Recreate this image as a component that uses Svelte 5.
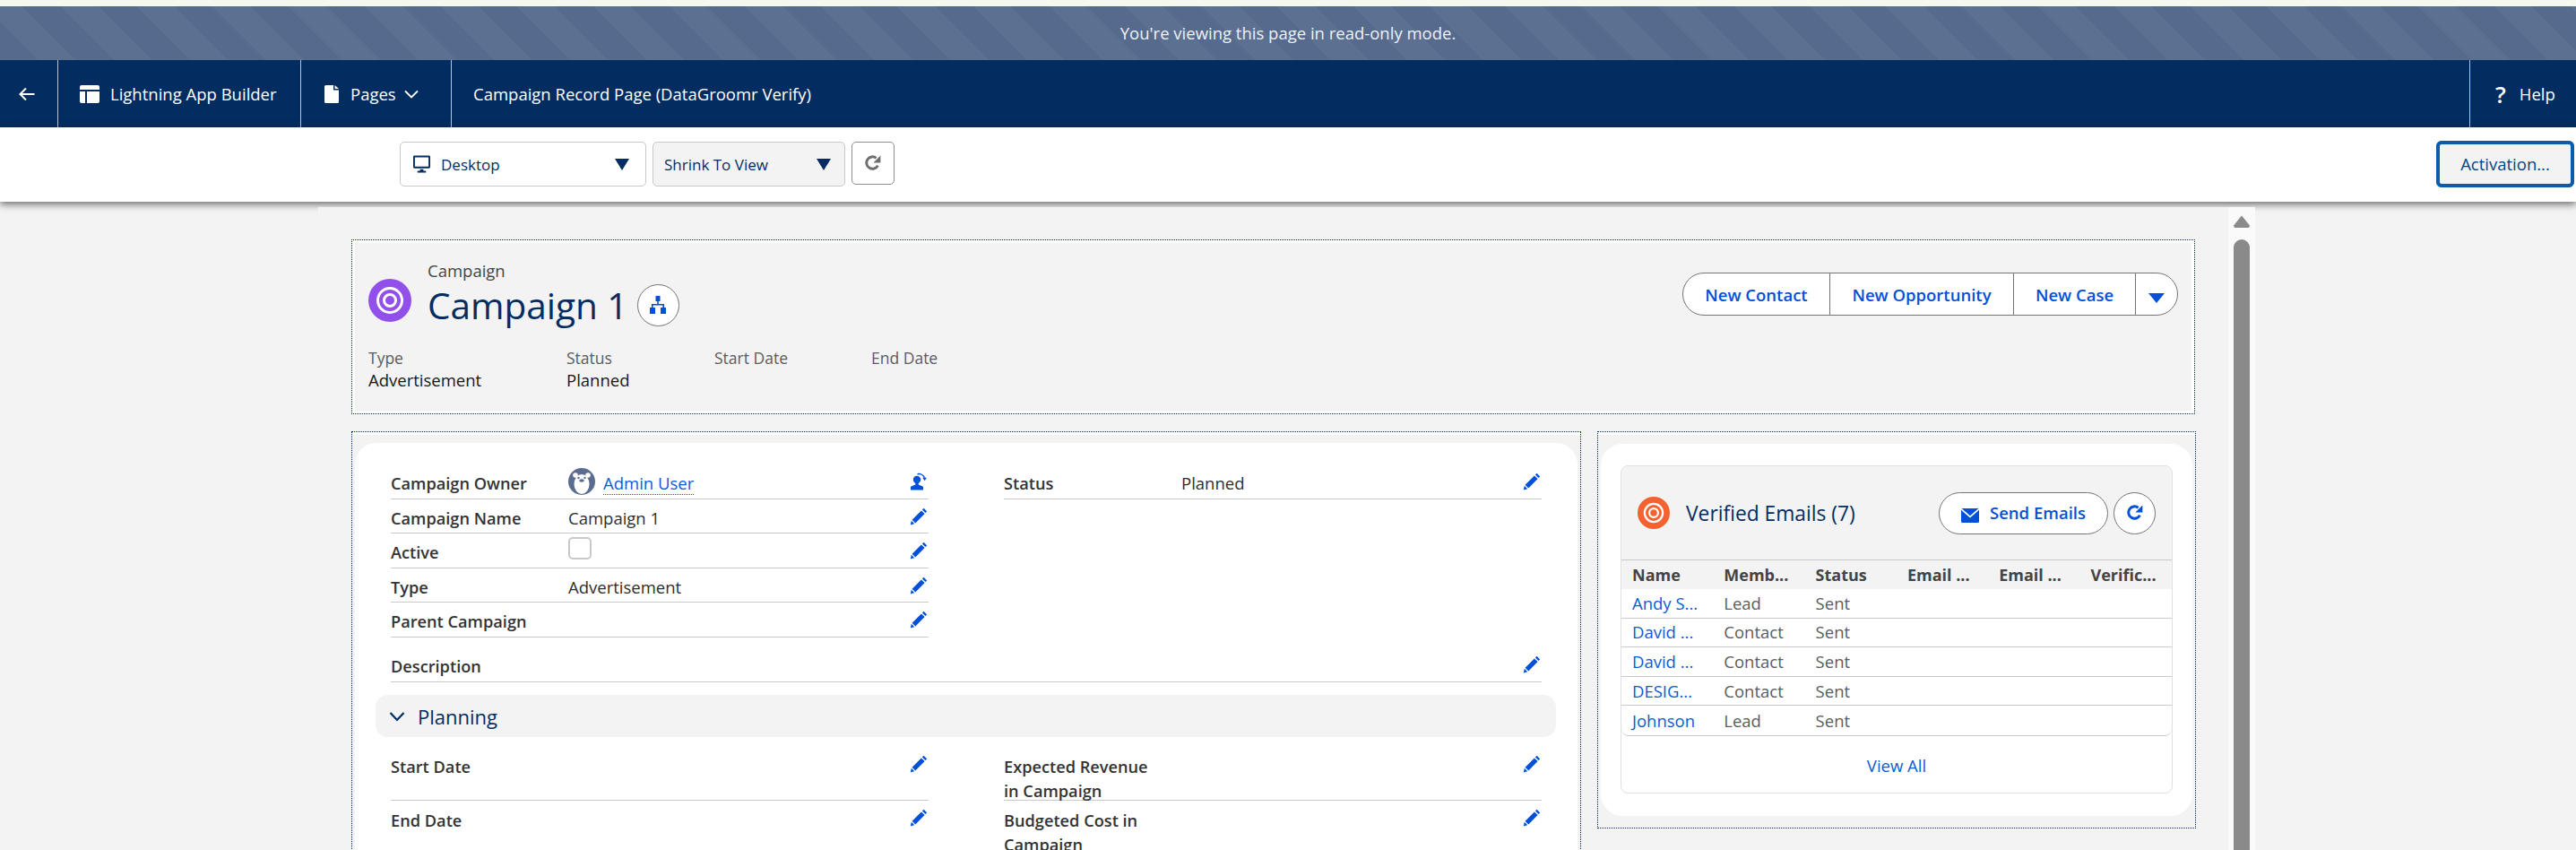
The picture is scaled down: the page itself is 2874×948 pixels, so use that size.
<script>
	const highlights = [
		{ label: 'Type', value: 'Advertisement', width: 221 },
		{ label: 'Status', value: 'Planned', width: 165 },
		{ label: 'Start Date', value: '', width: 175 },
		{ label: 'End Date', value: '', width: 120 }
	];

	const leftFields = [
		{ label: 'Campaign Name', value: 'Campaign 1' },
		{ label: 'Active', checkbox: true },
		{ label: 'Type', value: 'Advertisement' },
		{ label: 'Parent Campaign', value: '' }
	];

	const columns = ['Name', 'Memb...', 'Status', 'Email ...', 'Email ...', 'Verific...'];

	const emails = [
		{ name: 'Andy S...', type: 'Lead' },
		{ name: 'David ...', type: 'Contact' },
		{ name: 'David ...', type: 'Contact' },
		{ name: 'DESIG...', type: 'Contact' },
		{ name: 'Johnson', type: 'Lead' }
	];
</script>

{#snippet pencil()}
	<svg class="edit" viewBox="0 0 20 20" aria-hidden="true">
		<path d="M15.6 0.8l3.6 3.6-1.7 1.7-3.6-3.6z" />
		<path d="M12.9 3.4l3.7 3.7L6.3 17.4l-3.7-3.7z" />
		<path d="M1.8 14.8l3.4 3.4-4.4 1.2z" />
	</svg>
{/snippet}

{#snippet refresh()}
	<svg viewBox="0 0 20 20" aria-hidden="true">
		<path d="M15.4 12.6A6.700 6.700 0 1 1 13.600 4.300" fill="none" stroke="currentColor" stroke-width="3" />
		<path d="M18.400 1.600v8h-8z" fill="currentColor" />
	</svg>
{/snippet}

{#snippet target(color)}
	<svg class="target" viewBox="0 0 48 48" aria-hidden="true">
		<circle cx="24" cy="24" r="24" fill={color} />
		<circle cx="24" cy="24" r="13.500" fill="none" stroke="#fff" stroke-width="3" />
		<circle cx="24" cy="24" r="6.500" fill="none" stroke="#fff" stroke-width="3" />
	</svg>
{/snippet}

<div class="page">
	<div class="topline"></div>
	<div class="banner">You're viewing this page in read-only mode.</div>

	<nav class="nav">
		<div class="nav-item back">
			<svg class="back-arrow" viewBox="0 0 20 20" aria-hidden="true">
				<path d="M18.500 10H2.500M9 3.500L2.500 10 9 16.500" fill="none" stroke="#fff" stroke-width="2" />
			</svg>
		</div>
		<div class="nav-item builder">
			<svg class="nav-icon" viewBox="0 0 22 20" aria-hidden="true">
				<path d="M2 0h18a2 2 0 0 1 2 2v3H0V2a2 2 0 0 1 2-2zM0 7h6v13H2a2 2 0 0 1-2-2zM8 7h14v11a2 2 0 0 1-2 2H8z" fill="#fff" />
			</svg>
			<span>Lightning App Builder</span>
		</div>
		<div class="nav-item pages">
			<svg class="page-icon" viewBox="0 0 16 20" aria-hidden="true">
				<path d="M1.500 0H10v5.500h6v13a1.500 1.500 0 0 1-1.500 1.500h-13A1.500 1.500 0 0 1 0 18.500v-17A1.500 1.500 0 0 1 1.500 0zM11.500 0L16 4h-4.500z" fill="#fff" />
			</svg>
			<span>Pages</span>
			<svg class="nav-chevron" viewBox="0 0 16 10" aria-hidden="true">
				<path d="M1 1.500l7 7 7-7" fill="none" stroke="#fff" stroke-width="1.800" />
			</svg>
		</div>
		<div class="nav-item page-title">Campaign Record Page (DataGroomr Verify)</div>
		<div class="nav-item help">
			<span class="help-mark">?</span>
			<span>Help</span>
		</div>
	</nav>

	<div class="toolbar">
		<div class="select desktop">
			<svg class="monitor" viewBox="0 0 20 20" aria-hidden="true">
				<path d="M1.500 0h17A1.500 1.500 0 0 1 20 1.500v12a1.500 1.500 0 0 1-1.500 1.500h-17A1.500 1.500 0 0 1 0 13.500v-12A1.500 1.500 0 0 1 1.500 0zM2 2v11h16V2zM8 16h4v2h3v2H5v-2h3z" fill="#032d60" fill-rule="evenodd" />
			</svg>
			<span>Desktop</span>
			<i class="caret"></i>
		</div>
		<div class="select shrink">
			<span>Shrink To View</span>
			<i class="caret"></i>
		</div>
		<div class="tool-refresh">{@render refresh()}</div>
		<button class="activation">Activation...</button>
	</div>

	<div class="canvas">
		<div class="stage">
			<section class="frame header-frame">
				<div class="record-head">
					<div class="record-top">
						<div class="record-id">
							{@render target('#9050e9')}
							<div class="record-names">
								<div class="object-name">Campaign</div>
								<div class="record-title">
									<h1>Campaign 1</h1>
									<span class="round-btn hierarchy">
										<svg viewBox="0 0 18 20" aria-hidden="true">
											<path d="M6.500 0h5v6h-1.700v3H16v4h2v7h-6v-7h2.400v-2.400H3.600V13H6v7H0v-7h2V9h6.200V6H6.500z" fill="#0250d9" />
										</svg>
									</span>
								</div>
							</div>
						</div>
						<div class="action-group">
							<button class="new-contact">New Contact</button>
							<button class="new-opp">New Opportunity</button>
							<button class="new-case">New Case</button>
							<button class="more"><i></i></button>
						</div>
					</div>
					<div class="highlights">
						{#each highlights as item}
							<div class="highlight" style="width: {item.width}px">
								<div class="hl-label">{item.label}</div>
								<div class="hl-value">{item.value}</div>
							</div>
						{/each}
					</div>
				</div>
			</section>

			<div class="columns">
				<section class="frame main-frame">
					<div class="card detail-card">
						<div class="detail-grid">
							<div class="field-list">
								<div class="field">
									<span class="label">Campaign Owner</span>
									<svg class="avatar" viewBox="0 0 30 30" aria-hidden="true">
										<circle cx="15" cy="15" r="15" fill="#5a6c8f" />
										<ellipse cx="15" cy="18" rx="8.500" ry="11" fill="#fff" />
										<circle cx="8" cy="8" r="2.800" fill="#fff" />
										<circle cx="22" cy="8" r="2.800" fill="#fff" />
										<circle cx="11.500" cy="11" r="1.200" fill="#5a6c8f" />
										<circle cx="18.500" cy="11" r="1.200" fill="#5a6c8f" />
										<ellipse cx="15" cy="14" rx="2.800" ry="1.800" fill="#5a6c8f" />
									</svg>
									<a class="owner-link" href="#owner">Admin User</a>
									<svg class="edit" viewBox="0 0 20 20" aria-hidden="true">
										<circle cx="8" cy="8" r="4.200" />
										<path d="M6.300 12h3.400v1.600l5.300 2.200V19.500H1v-3.700l5.300-2.200z" />
										<path d="M8.500 1.800a6.800 6.800 0 0 1 8 4" fill="none" stroke="#0250d9" stroke-width="1.500" />
										<path d="M14.200 5.800h4.800l-2.400 3.400z" />
									</svg>
								</div>
								{#each leftFields as field}
									<div class="field">
										<span class="label">{field.label}</span>
										{#if field.checkbox}
											<span class="checkbox"></span>
										{:else}
											<span class="value">{field.value}</span>
										{/if}
										{@render pencil()}
									</div>
								{/each}
							</div>
							<div class="field-list">
								<div class="field">
									<span class="label">Status</span>
									<span class="value">Planned</span>
									{@render pencil()}
								</div>
							</div>
						</div>

						<div class="field description">
							<span class="label">Description</span>
							{@render pencil()}
						</div>

						<div class="section-head">
							<svg viewBox="0 0 18 12" aria-hidden="true">
								<path d="M1.500 2l7.500 8 7.500-8" fill="none" stroke="#032d60" stroke-width="2.200" />
							</svg>
							<span>Planning</span>
						</div>

						<div class="detail-grid planning">
							<div class="field-list">
								<div class="field tall">
									<span class="label">Start Date</span>
									{@render pencil()}
								</div>
								<div class="field tall">
									<span class="label">End Date</span>
									{@render pencil()}
								</div>
							</div>
							<div class="field-list">
								<div class="field tall">
									<span class="label">Expected Revenue<br />in Campaign</span>
									{@render pencil()}
								</div>
								<div class="field tall">
									<span class="label">Budgeted Cost in<br />Campaign</span>
									{@render pencil()}
								</div>
							</div>
						</div>
					</div>
				</section>

				<section class="frame side-frame">
					<div class="card side-card">
						<div class="related">
							<div class="related-head">
								<div class="related-title">
									{@render target('#f4622f')}
									<h2>Verified Emails (7)</h2>
								</div>
								<div class="related-actions">
									<button class="send">
										<svg viewBox="0 0 20 16" aria-hidden="true">
											<path d="M0.500 0h19L10 8.200z" fill="#0250d9" />
											<path d="M0 1.800l10 8.800 10-8.800V14.500A1.500 1.500 0 0 1 18.500 16h-17A1.500 1.500 0 0 1 0 14.500z" fill="#0250d9" />
										</svg>
										Send Emails
									</button>
									<span class="round-btn">{@render refresh()}</span>
								</div>
							</div>
							<div class="table">
								<div class="row table-head">
									{#each columns as col}
										<span>{col}</span>
									{/each}
								</div>
								{#each emails as email}
									<div class="row">
										<a href="#record">{email.name}</a>
										<span>{email.type}</span>
										<span>Sent</span>
									</div>
								{/each}
							</div>
							<div class="view-all"><a href="#all">View All</a></div>
						</div>
					</div>
				</section>
			</div>
		</div>

		<div class="scrollbar">
			<svg class="scroll-up" viewBox="0 0 18 14" aria-hidden="true">
				<path d="M9 0.500L18 11.500Q18 14 16 14H2Q0 14 0 11.500z" fill="#8a8a8a" />
			</svg>
			<div class="thumb"></div>
		</div>
		<div class="gutter"></div>
	</div>
</div>

<style>
	:global(body) {
		margin: 0;
		background: #f3f3f3;
	}

	.page {
		height: 948px;
		width: 2874px;
		overflow: hidden;
		display: flex;
		flex-direction: column;
		font-family: 'Open Sans', 'Noto Sans', sans-serif;
		font-size: 18.500px;
		line-height: 24px;
		color: #181818;
	}

	button {
		font: inherit;
		cursor: pointer;
	}

	a {
		color: #0b5cd5;
		text-decoration: none;
	}

	.topline {
		height: 7px;
		background: #f5f8ee;
	}

	.banner {
		height: 60px;
		display: flex;
		align-items: center;
		justify-content: center;
		color: #eef1f6;
		background: repeating-linear-gradient(45deg, #566a8e 0 30px, #5c7091 30px 60px);
	}

	.nav {
		height: 75px;
		display: flex;
		background: #032d60;
		color: #fff;
	}

	.nav-item {
		display: flex;
		align-items: center;
		border-right: 1px solid #b8c4d4;
	}

	.back {
		width: 65px;
		padding-left: 20px;
		box-sizing: border-box;
	}

	.back-arrow {
		width: 20px;
		height: 20px;
	}

	.builder {
		width: 271px;
		padding-left: 24px;
		box-sizing: border-box;
		gap: 12px;
	}

	.nav-icon {
		width: 22px;
		height: 20px;
	}

	.pages {
		width: 168px;
		padding-left: 26px;
		box-sizing: border-box;
	}

	.page-icon {
		width: 16px;
		height: 20px;
		margin-right: 13px;
	}

	.nav-chevron {
		width: 16px;
		height: 10px;
		margin-left: 9px;
	}

	.page-title {
		flex: 1;
		padding-left: 24px;
	}

	.help {
		width: 118px;
		padding-left: 28px;
		box-sizing: border-box;
		border-right: 0;
	}

	.help-mark {
		font-size: 26px;
		font-weight: 600;
		margin-right: 15px;
	}

	.toolbar {
		height: 83px;
		display: flex;
		align-items: flex-start;
		padding: 16px 2px 0 446px;
		box-sizing: border-box;
		background: #fff;
		box-shadow: 0 3px 8px rgba(0, 0, 0, 0.55);
		position: relative;
		z-index: 2;
		color: #032d60;
	}

	.select {
		height: 50px;
		display: flex;
		align-items: center;
		box-sizing: border-box;
		border: 1px solid #c9c9c9;
		border-radius: 5px;
		font-size: 17px;
	}

	.select span {
		padding-top: 2px;
	}

	.desktop {
		width: 275px;
		padding: 0 18px 0 14px;
		background: #fff;
	}

	.shrink {
		width: 215px;
		margin-left: 7px;
		padding: 0 15px 0 12px;
		background: #f3f3f3;
	}

	.monitor {
		width: 19px;
		height: 20px;
		margin-right: 12px;
	}

	.caret {
		margin-left: auto;
		width: 0;
		height: 0;
		border-left: 8px solid transparent;
		border-right: 8px solid transparent;
		border-top: 13px solid #032d60;
	}

	.tool-refresh {
		width: 48px;
		height: 48px;
		margin-left: 7px;
		box-sizing: border-box;
		display: flex;
		align-items: center;
		justify-content: center;
		border: 1px solid #8f8f8f;
		border-radius: 5px;
		color: #706e6b;
	}

	.tool-refresh svg {
		width: 20px;
		height: 20px;
	}

	.activation {
		margin-left: auto;
		width: 154px;
		height: 52px;
		margin-top: -1px;
		box-sizing: border-box;
		background: #f3f3f3;
		color: #014486;
		border: 1px solid #8f8f8f;
		border-radius: 6px;
		outline: 3px solid #0b5cab;
		outline-offset: -3px;
		box-shadow: inset 0 0 0 3px #0b5cab;
	}

	.canvas {
		flex: 1;
		display: flex;
		padding: 6px 0 0 355px;
		min-height: 0;
		position: relative;
	}

	.stage {
		width: 2131px;
		box-sizing: border-box;
		padding: 36px 37px 0;
		background: #f3f3f3;
		position: relative;
		z-index: 3;
	}

	.scrollbar {
		width: 30px;
		background: #fafafa;
		padding: 9px 6px 0;
		box-sizing: border-box;
		position: relative;
		z-index: 3;
	}

	.scroll-up {
		display: block;
		width: 18px;
		height: 14px;
	}

	.thumb {
		margin-top: 13px;
		height: 800px;
		background: #8a8a8a;
		border-radius: 9px 9px 0 0;
	}

	.gutter {
		flex: 1;
	}

	.frame {
		box-sizing: border-box;
		border: 1px dotted #032d60;
		padding: 3px;
		background: #fff;
	}

	.header-frame {
		height: 195px;
	}

	.record-head {
		height: 100%;
		box-sizing: border-box;
		background: #f3f3f3;
		padding: 33px 15px 0 15px;
	}

	.record-top {
		display: flex;
		justify-content: space-between;
		align-items: flex-start;
		height: 84px;
	}

	.record-id {
		display: flex;
		gap: 18px;
		align-items: center;
	}

	.target {
		display: block;
		width: 48px;
		height: 48px;
		flex: none;
	}

	.record-names {
		margin-top: -14px;
	}

	.object-name {
		color: #444;
		line-height: 24px;
	}

	.record-title {
		display: flex;
		align-items: center;
		gap: 10px;
		margin-top: 1px;
	}

	h1 {
		margin: 0;
		font-size: 40.500px;
		font-weight: 400;
		line-height: 48px;
		color: #032d60;
		padding-top: 2px;
	}

	.round-btn {
		width: 47px;
		height: 47px;
		box-sizing: border-box;
		display: flex;
		align-items: center;
		justify-content: center;
		background: #fff;
		border: 1px solid #747474;
		border-radius: 50%;
		color: #0250d9;
		flex: none;
	}

	.round-btn svg {
		width: 20px;
		height: 20px;
	}

	.action-group {
		display: flex;
		height: 48px;
		box-sizing: border-box;
		border: 1px solid #747474;
		border-radius: 24px;
		background: #fff;
		overflow: hidden;
	}

	.action-group button {
		border: 0;
		border-right: 1px solid #747474;
		background: none;
		color: #0250d9;
		font-weight: 600;
		padding: 1px 0 0;
	}

	.new-contact {
		width: 164px;
	}

	.new-opp {
		width: 205px;
	}

	.new-case {
		width: 136px;
	}

	.action-group .more {
		width: 46px;
		border-right: 0;
	}

	.more i {
		display: block;
		margin: 8px auto 0;
		width: 0;
		height: 0;
		border-left: 9px solid transparent;
		border-right: 9px solid transparent;
		border-top: 11px solid #0250d9;
	}

	.highlights {
		display: flex;
		margin-top: -1px;
	}

	.hl-label {
		color: #5c5c5c;
		line-height: 24px;
		font-size: 17.500px;
	}

	.hl-value {
		line-height: 26px;
		min-height: 26px;
	}

	.columns {
		display: grid;
		grid-template-columns: 1372px 668px;
		gap: 18px;
		margin-top: 19px;
		align-items: start;
	}

	.main-frame {
		height: 520px;
	}

	.card {
		background: #fff;
		border-radius: 24px;
	}

	.detail-card,
	.side-card {
		box-sizing: border-box;
	}

	.main-frame,
	.side-frame {
		background: linear-gradient(#fff 0 3px, #f3f3f3 3px);
	}

	.detail-card {
		margin-top: 9px;
		height: 600px;
		padding: 24px 24px 0;
		position: relative;
	}

	.detail-grid {
		display: grid;
		grid-template-columns: 600px 600px;
		gap: 84px;
		padding-left: 16px;
		height: 192px;
	}

	.field {
		height: 38.500px;
		box-sizing: border-box;
		display: flex;
		align-items: flex-start;
		padding-top: 9px;
		border-bottom: 1px solid #c9c9c9;
		position: relative;
	}

	.label {
		width: 198px;
		flex: none;
		font-weight: 600;
		color: #333;
		font-size: 18.200px;
	}

	.value {
		color: #2e2e2e;
	}

	.edit {
		width: 20px;
		height: 20px;
		margin-left: auto;
		margin-right: 1px;
		fill: #0250d9;
		flex: none;
	}

	.avatar {
		width: 30px;
		height: 30px;
		margin: -5px 9px 0 0;
	}

	.owner-link {
		border-bottom: 1px dotted #0b5cd5;
		height: 24px;
	}

	.checkbox {
		width: 26px;
		height: 25px;
		box-sizing: border-box;
		border: 2px solid #c9c9c9;
		border-radius: 5px;
		background: #fff;
		margin-top: -5px;
	}

	.description {
		margin: 0 16px 0 16px;
		width: 1284px;
		height: 51px;
		padding-top: 21px;
		margin-top: 0;
	}

	.section-head {
		margin: 14px 0 0 -1px;
		width: 1317px;
		height: 47px;
		background: #f3f3f3;
		border-radius: 14px;
		display: flex;
		align-items: center;
		padding-left: 15px;
		box-sizing: border-box;
		font-size: 22px;
		color: #032d60;
	}

	.section-head svg {
		width: 18px;
		height: 12px;
		margin-right: 14px;
	}

	.planning {
		margin-top: 20px;
	}

	.tall {
		height: 51px;
		padding-top: 0;
		line-height: 27px;
	}

	.tall + .tall {
		height: 60px;
		margin-top: 9px;
		border-bottom: 0;
		padding-top: 0;
	}

	.side-frame {
		height: 443px;
	}

	.side-card {
		margin-top: 10px;
		height: 415px;
		padding: 24px 22px 0;
	}

	.related {
		height: 366px;
		box-sizing: border-box;
		border: 1px solid #e0e0e0;
		border-radius: 8px;
		overflow: hidden;
		display: flex;
		flex-direction: column;
	}

	.related-head {
		height: 105px;
		flex: none;
		box-sizing: border-box;
		background: #f3f3f3;
		border-bottom: 1px solid #c9c9c9;
		display: flex;
		align-items: center;
		justify-content: space-between;
		padding: 0 18px 0 18px;
	}

	.related-title {
		display: flex;
		align-items: center;
		gap: 18px;
	}

	.related-title .target {
		width: 36px;
		height: 36px;
	}

	h2 {
		margin: 0;
		font-size: 22.800px;
		font-weight: 400;
		color: #032d60;
		padding-top: 2px;
	}

	.related-actions {
		display: flex;
		gap: 6px;
	}

	.send {
		width: 189px;
		height: 47px;
		padding: 0;
		display: flex;
		align-items: center;
		justify-content: center;
		gap: 12px;
		background: #fff;
		border: 1px solid #747474;
		border-radius: 24px;
		color: #0250d9;
		font-weight: 600;
	}

	.send svg {
		width: 20px;
		height: 16px;
		margin-top: 6px;
	}

	.table {
		flex: none;
		border-bottom: 1px solid #c9c9c9;
		border-radius: 0 0 8px 8px;
	}

	.row {
		height: 32.600px;
		box-sizing: border-box;
		display: grid;
		grid-template-columns: repeat(6, 102.300px);
		padding-left: 12px;
		align-items: center;
		border-bottom: 1px solid #c9c9c9;
		color: #5c5c5c;
	}

	.row:last-child {
		border-bottom: 0;
	}

	.table-head {
		height: 32px;
		background: #f3f3f3;
		border-bottom: 0;
		font-weight: 700;
		color: #444;
		font-size: 18px;
	}

	.view-all {
		flex: 1;
		display: flex;
		align-items: center;
		justify-content: center;
		padding-top: 3px;
	}
</style>
